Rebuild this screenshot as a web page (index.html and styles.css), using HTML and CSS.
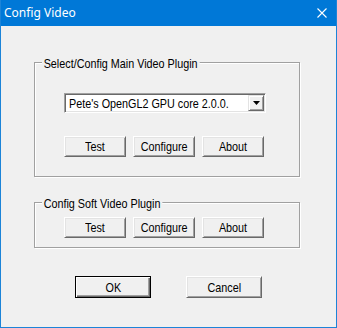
FILE: index.html
```html
<!DOCTYPE html>
<html>
<head>
<meta charset="utf-8"/>
<link rel="stylesheet" href="styles.css">
</head>
<body>
<div class="window">
  <div class="titlebar">
    <span class="title">Config Video</span>
    <svg class="close" width="10" height="10" viewBox="0 0 10 10">
      <path d="M0.5 0.5 L9.5 9.5 M9.5 0.5 L0.5 9.5" stroke="#fff" stroke-width="1.1" fill="none"/>
    </svg>
  </div>

  <div class="client">
    <div class="group group-main">
      <span class="group-label">Select/Config Main Video Plugin</span>
      <div class="combo">
        <span class="combo-text"><span class="narrow">Pete's OpenGL2 GPU core 2.0.0.</span></span>
        <span class="combo-btn">
          <svg width="7" height="4" viewBox="0 0 7 4"><polygon points="0,0 7,0 3.5,4" fill="#000"/></svg>
        </span>
      </div>
      <div class="btn-row">
        <button class="btn"><span class="narrow">Test</span></button>
        <button class="btn"><span class="narrow">Configure</span></button>
        <button class="btn"><span class="narrow">About</span></button>
      </div>
    </div>

    <div class="group group-soft">
      <span class="group-label">Config Soft Video Plugin</span>
      <div class="btn-row">
        <button class="btn"><span class="narrow">Test</span></button>
        <button class="btn"><span class="narrow">Configure</span></button>
        <button class="btn"><span class="narrow">About</span></button>
      </div>
    </div>

    <div class="dialog-row">
      <button class="btn btn-wide btn-default"><span class="narrow">OK</span></button>
      <button class="btn btn-wide"><span class="narrow">Cancel</span></button>
    </div>
  </div>
</div>
</body>
</html>
```

FILE: styles.css
```css
body {
  margin: 0;
  padding: 0;
  background: #f0f0f0;
}

.window {
  width: 337px;
  height: 328px;
  box-sizing: border-box;
  border: 1px solid #1c84d8;
  border-top: none;
  background: #f0f0f0;
  display: flex;
  flex-direction: column;
  font-family: "Liberation Sans", Arial, sans-serif;
  font-size: 13px;
  line-height: 15px;
  color: #000;
}

/* the dialog font is Arial Narrow, which is not installed: squeeze Arial */
.narrow {
  display: inline-block;
  white-space: nowrap;
  transform: scaleX(0.83);
}

.titlebar {
  height: 26px;
  flex: none;
  background: #0078d7;
  display: flex;
  align-items: center;
  justify-content: space-between;
  padding: 0 9px 0 3px;
}

.title {
  font-family: "Noto Sans", "Open Sans", sans-serif;
  font-size: 12px;
  color: #fff;
  line-height: 16px;
}

.close {
  display: block;
}

.client {
  padding: 36px 0 0 33px;
}

.group {
  position: relative;
  box-sizing: border-box;
  width: 266px;
  border: 1px solid #a0a0a0;
  box-shadow: 1px 1px 0 #fff, inset 1px 1px 0 #fff;
}

.group-main {
  height: 115px;
  padding: 30px 0 0 29px;
}

.group-soft {
  height: 46px;
  margin-top: 25px;
  padding: 14px 0 0 29px;
}

.group-label {
  position: absolute;
  top: -7px;
  left: 7px;
  padding: 0 2px;
  background: #f0f0f0;
  white-space: nowrap;
  transform: scaleX(0.83);
  transform-origin: left center;
}

.combo {
  width: 202px;
  height: 20px;
  box-sizing: border-box;
  background: #fff;
  border: 1px solid;
  border-color: #a0a0a0 #fff #fff #a0a0a0;
  box-shadow: inset 1px 1px 0 #696969, inset -1px -1px 0 #e3e3e3;
  display: flex;
  align-items: center;
  padding: 1px;
}

.combo-text {
  flex: 1;
  padding-left: 3px;
  white-space: nowrap;
  overflow: hidden;
}

.combo-text .narrow {
  transform-origin: left center;
}

.combo-btn {
  width: 16px;
  height: 16px;
  box-sizing: border-box;
  background: #f0f0f0;
  border: 1px solid;
  border-color: #e3e3e3 #696969 #696969 #e3e3e3;
  box-shadow: inset 1px 1px 0 #fff, inset -1px -1px 0 #a0a0a0;
  display: flex;
  align-items: center;
  justify-content: center;
}

.combo-btn svg {
  display: block;
}

.btn-row {
  display: flex;
  gap: 7px;
}

.group-main .btn-row {
  margin-top: 23px;
}

.btn {
  width: 62px;
  height: 21px;
  box-sizing: border-box;
  margin: 0;
  padding: 0;
  font: inherit;
  color: #000;
  background: #f0f0f0;
  border: 1px solid;
  border-color: #fff #696969 #696969 #fff;
  box-shadow: inset 1px 1px 0 #e3e3e3, inset -1px -1px 0 #a0a0a0;
  border-radius: 0;
}

.dialog-row {
  display: flex;
  gap: 35px;
  margin-top: 28px;
  padding-left: 41px;
}

.btn-wide {
  width: 76px;
  height: 22px;
}

.btn-default {
  border-color: #000;
  box-shadow: inset 1px 1px 0 #fff, inset -1px -1px 0 #696969, inset -2px -2px 0 #a0a0a0;
}
```
